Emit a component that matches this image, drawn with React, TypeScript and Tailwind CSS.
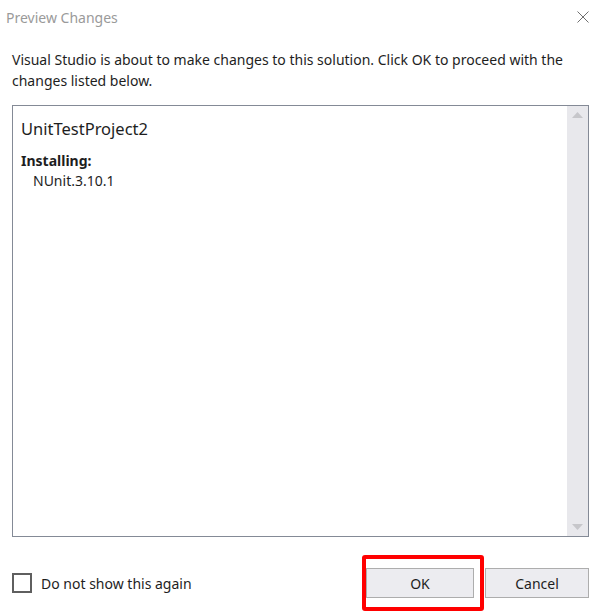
export default function App() {
    return (
        <div
            className="w-[602px] h-[611px] bg-white overflow-hidden flex flex-col text-[#1e1e1e]"
            style={{ fontFamily: '"Noto Sans", "Open Sans", sans-serif' }}
        >
            {/* title bar */}
            <div className="h-[34px] flex items-center justify-between pl-[6px] pr-[13px] shrink-0">
                <span className="text-[14px] text-[#9a9a9a]">Preview Changes</span>
                <svg width="12" height="12" viewBox="0 0 12 12">
                    <path d="M0.5 0.5 L11.5 11.5 M11.5 0.5 L0.5 11.5" stroke="#6f6f6f" strokeWidth="1" />
                </svg>
            </div>

            <p className="px-3 mt-[15px] text-[14px] leading-[21px]">
                Visual Studio is about to make changes to this solution. Click OK to proceed with the
                changes listed below.
            </p>

            <div className="mx-3 mt-[14px] h-[432px] w-[577px] border border-[#848a96] flex">
                <div className="flex-1 pl-[8px] pt-[11px]">
                    <div className="text-[16.5px] leading-[24px]">UnitTestProject2</div>
                    <div className="mt-[10px] text-[14px] leading-[20px] font-bold">Installing:</div>
                    <div className="pl-[12px] text-[14px] leading-[20px]">NUnit.3.10.1</div>
                </div>
                <div className="w-[21px] bg-[#e8e8ec] flex flex-col justify-between items-center py-[6px]">
                    <svg width="11" height="6" viewBox="0 0 11 6">
                        <path d="M5.5 0 L11 6 L0 6 Z" fill="#c6c6ca" />
                    </svg>
                    <svg width="11" height="6" viewBox="0 0 11 6">
                        <path d="M0 0 L11 0 L5.5 6 Z" fill="#c6c6ca" />
                    </svg>
                </div>
            </div>

            {/* footer */}
            <div className="flex items-center justify-between pl-3 pr-[13px] mt-[18px]">
                <label className="flex items-center gap-[9px]">
                    <span className="w-[20px] h-[20px] border-2 border-[#5f5f5f] bg-white" />
                    <span className="text-[14px]">Do not show this again</span>
                </label>
                <div className="flex items-center gap-[1px]">
                    <div className="border-[4px] border-[#ff0000] rounded-[3px] pt-[9px] pb-[9px] pr-[6px]">
                        <button className="w-[108px] h-[30px] bg-[#ececf0] border border-[#adadad] text-[14px]">
                            OK
                        </button>
                    </div>
                    <button className="w-[104px] h-[30px] bg-[#ececf0] border border-[#adadad] text-[14px]">
                        Cancel
                    </button>
                </div>
            </div>
        </div>
    )
}
